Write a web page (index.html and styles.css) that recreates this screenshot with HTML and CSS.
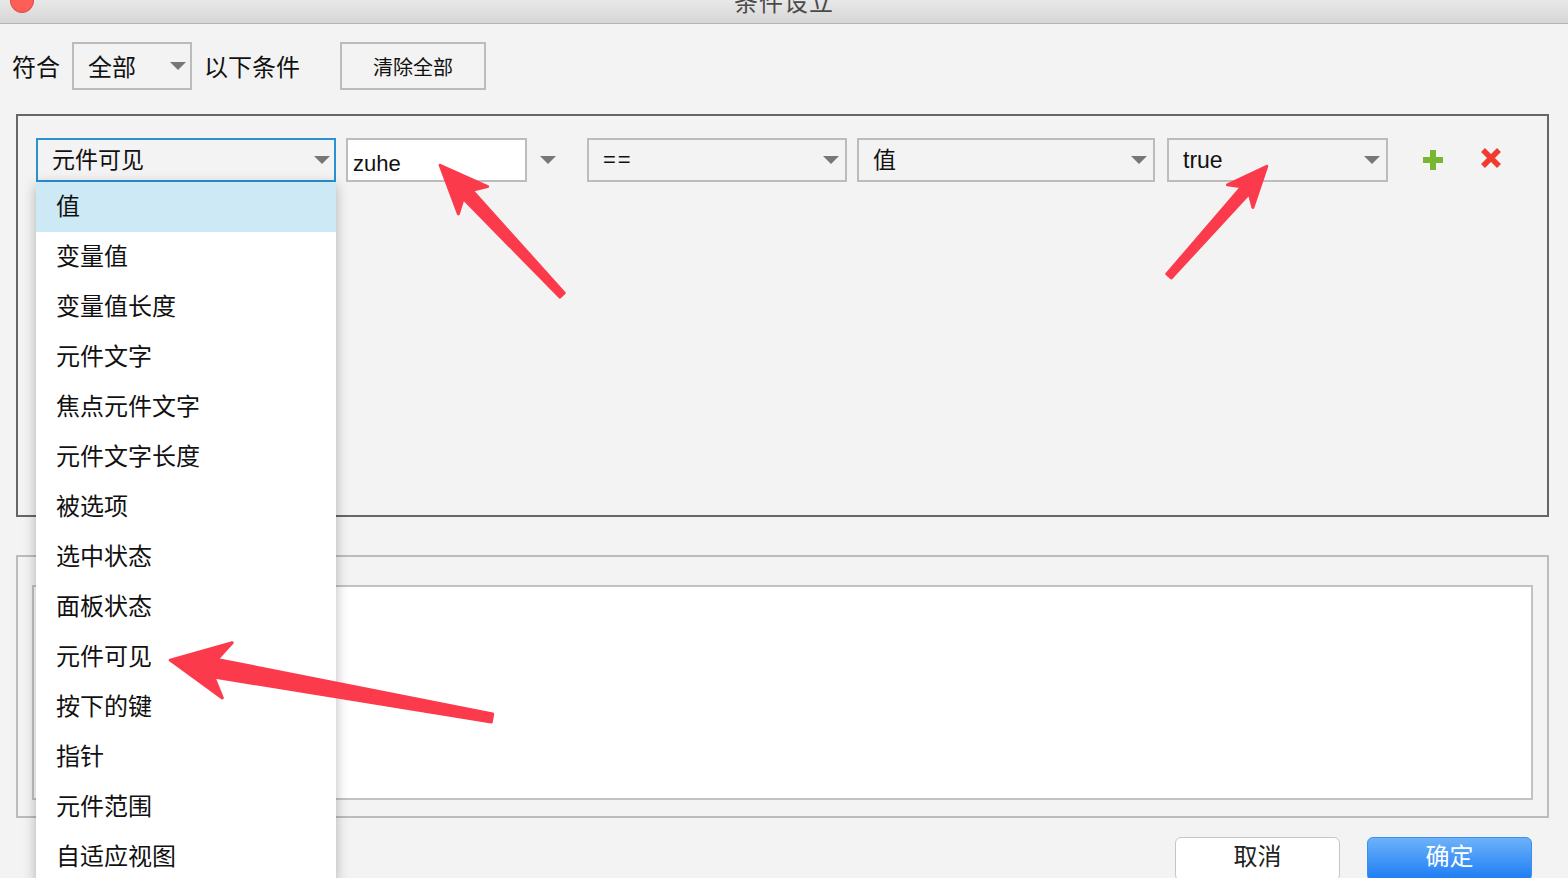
FILE: index.html
```html
<!DOCTYPE html>
<html lang="zh-CN">
<head>
  <meta charset="UTF-8">
  <title>条件设立</title>
  <link rel="stylesheet" href="styles.css">
</head>
<body>
  <div class="window">
    <div class="titlebar">
      <span class="close-dot"></span>
      <span class="title">条件设立</span>
      <span></span>
    </div>

    <div class="toolbar">
      <span class="label">符合</span>
      <div class="select select-match">全部<i class="caret"></i></div>
      <span class="label">以下条件</span>
      <button class="btn-clear">清除全部</button>
    </div>

    <div class="panel">
      <div class="cond-row">
        <div class="select-wrap">
          <div class="select select-focus w-type">元件可见<i class="caret"></i></div>
          <ul class="dropdown">
            <li class="active">值</li>
            <li>变量值</li>
            <li>变量值长度</li>
            <li>元件文字</li>
            <li>焦点元件文字</li>
            <li>元件文字长度</li>
            <li>被选项</li>
            <li>选中状态</li>
            <li>面板状态</li>
            <li>元件可见</li>
            <li>按下的键</li>
            <li>指针</li>
            <li>元件范围</li>
            <li>自适应视图</li>
          </ul>
        </div>
        <div class="input w-name">zuhe</div>
        <i class="caret caret-free"></i>
        <div class="select w-op"><span class="op">==</span><i class="caret"></i></div>
        <div class="select w-kind">值<i class="caret"></i></div>
        <div class="select w-value">true<i class="caret"></i></div>
        <span class="icon icon-add">
          <svg width="24" height="24" viewBox="0 0 24 24"><path d="M12 2v20M2 12h20" stroke="#78b530" stroke-width="6"/></svg>
        </span>
        <span class="icon icon-del">
          <svg width="24" height="24" viewBox="0 0 24 24"><path d="M4 4l16 16M20 4L4 20" stroke="#f23b30" stroke-width="5.5"/></svg>
        </span>
      </div>
    </div>

    <fieldset class="desc">
      <legend>描述</legend>
      <div class="desc-box"></div>
    </fieldset>

    <div class="actions">
      <button class="btn">取消</button>
      <button class="btn btn-primary">确定</button>
    </div>

    <!-- annotation arrows -->
    <svg class="annotations" width="1568" height="878" viewBox="0 0 1568 878">
      <g fill="#fb3a4b" stroke="#fb3a4b" stroke-width="3" stroke-linejoin="round">
        <polygon transform="translate(562 295) rotate(-133.2)" points="0,-3 138,-6 130,-20 178,0 130,20 138,6 0,3"/>
        <polygon transform="translate(1169 276) rotate(-48.3)" points="0,-3 115,-5 107,-17 147,0 107,17 115,5 0,3"/>
        <polygon transform="translate(492 718) rotate(-169.8)" points="0,-4 281,-9 269,-28 327,0 269,28 281,9 0,4"/>
      </g>
    </svg>
  </div>
</body>
</html>
```

FILE: styles.css
```css
* { box-sizing: border-box; }
body { margin: 0; background: #f3f3f3; font-family: "Liberation Sans", "Noto Sans CJK SC", sans-serif; color: #111; }
.window { position: relative; width: 1568px; height: 878px; overflow: hidden; background: #f3f3f3; }

/* title bar */
.titlebar { display: grid; grid-template-columns: 1fr auto 1fr; height: 24px; overflow: hidden; background: linear-gradient(#e8e8e8, #d6d6d6); border-bottom: 1px solid #b4b4b4; }
.close-dot { width: 24px; height: 24px; margin: -11px 0 0 10px; border-radius: 50%; background: #fc5f57; border: 1px solid #e2463f; }
.title { font-size: 24px; line-height: 24px; margin-top: -9px; color: #4a4a4a; letter-spacing: 1px; }

/* top row */
.toolbar { display: flex; align-items: center; height: 48px; margin-top: 18px; padding-left: 12px; }
.label { font-size: 24px; line-height: 28px; padding-top: 3px; }
.toolbar .select { margin: 0 12px; }
.btn-clear { margin-left: 40px; width: 146px; height: 48px; background: #f3f3f3; border: 2px solid #bcbcbc; font-family: inherit; font-size: 20px; color: #111; padding: 0; }

/* selects and inputs */
.select { display: flex; align-items: center; justify-content: space-between; height: 44px; padding: 0 6px 0 14px; border: 2px solid #bcbcbc; background: #f3f3f3; font-size: 23px; line-height: 28px; }
.select-match { width: 120px; height: 48px; padding: 3px 4px 0 14px; font-size: 24px; }
.select-match .caret { margin-top: -3px; }
.select-focus { border-color: #2b92d2; }
.caret { display: block; width: 0; height: 0; border-left: 8px solid transparent; border-right: 8px solid transparent; border-top: 8px solid #777; }
.caret-free { margin: 0 31px 0 13px; }
.input { display: flex; align-items: center; height: 44px; padding: 7px 0 0 5px; border: 2px solid #bcbcbc; background: #fff; font-size: 22px; }
.op { letter-spacing: 2px; font-size: 22px; }

/* condition panel */
.panel { height: 403px; margin: 24px 19px 0 16px; border: 2px solid #666; padding: 22px 0 0 18px; }
.cond-row { display: flex; align-items: center; }
.select-wrap { position: relative; margin-right: 10px; }
.w-type { width: 300px; padding-right: 4px; }
.w-name { width: 181px; }
.w-op { width: 260px; margin-right: 10px; padding-left: 14px; }
.w-kind { width: 298px; margin-right: 12px; }
.w-value { width: 221px; }
.icon { display: flex; }
.icon-add { margin-left: 33px; }
.icon-del { margin-left: 34px; margin-top: -4px; }

/* dropdown list */
.dropdown { position: absolute; top: 100%; left: 0; z-index: 5; width: 300px; margin: 0; padding: 0; list-style: none; background: #fff; box-shadow: 0 3px 12px rgba(0, 0, 0, 0.28); }
.dropdown li { height: 50px; padding-left: 20px; font-size: 24px; line-height: 50px; }
.dropdown li.active { background: #cde9f5; }

/* description box */
.desc { height: 272px; margin: 29px 19px 0 16px; padding: 19px 14px 14px; border: 2px solid #bcbcbc; }
.desc legend { margin-left: 8px; padding: 0 4px; font-size: 20px; line-height: 20px; }
.desc-box { height: 215px; background: #fff; border: 2px solid #c2c2c2; }

/* bottom buttons */
.actions { display: flex; justify-content: flex-end; gap: 27px; margin-top: 19px; padding-right: 36px; }
.btn { width: 165px; height: 44px; border: 1px solid #c6c6c6; border-radius: 6px; background: #fff; font-family: inherit; font-size: 24px; line-height: 28px; color: #222; padding: 0 0 4px; }
.btn-primary { border-color: #3a8ef0; background: linear-gradient(#6cb2f9, #1c7cf4); color: #fff; }

.annotations { position: absolute; top: 0; left: 0; z-index: 10; pointer-events: none; }
```
